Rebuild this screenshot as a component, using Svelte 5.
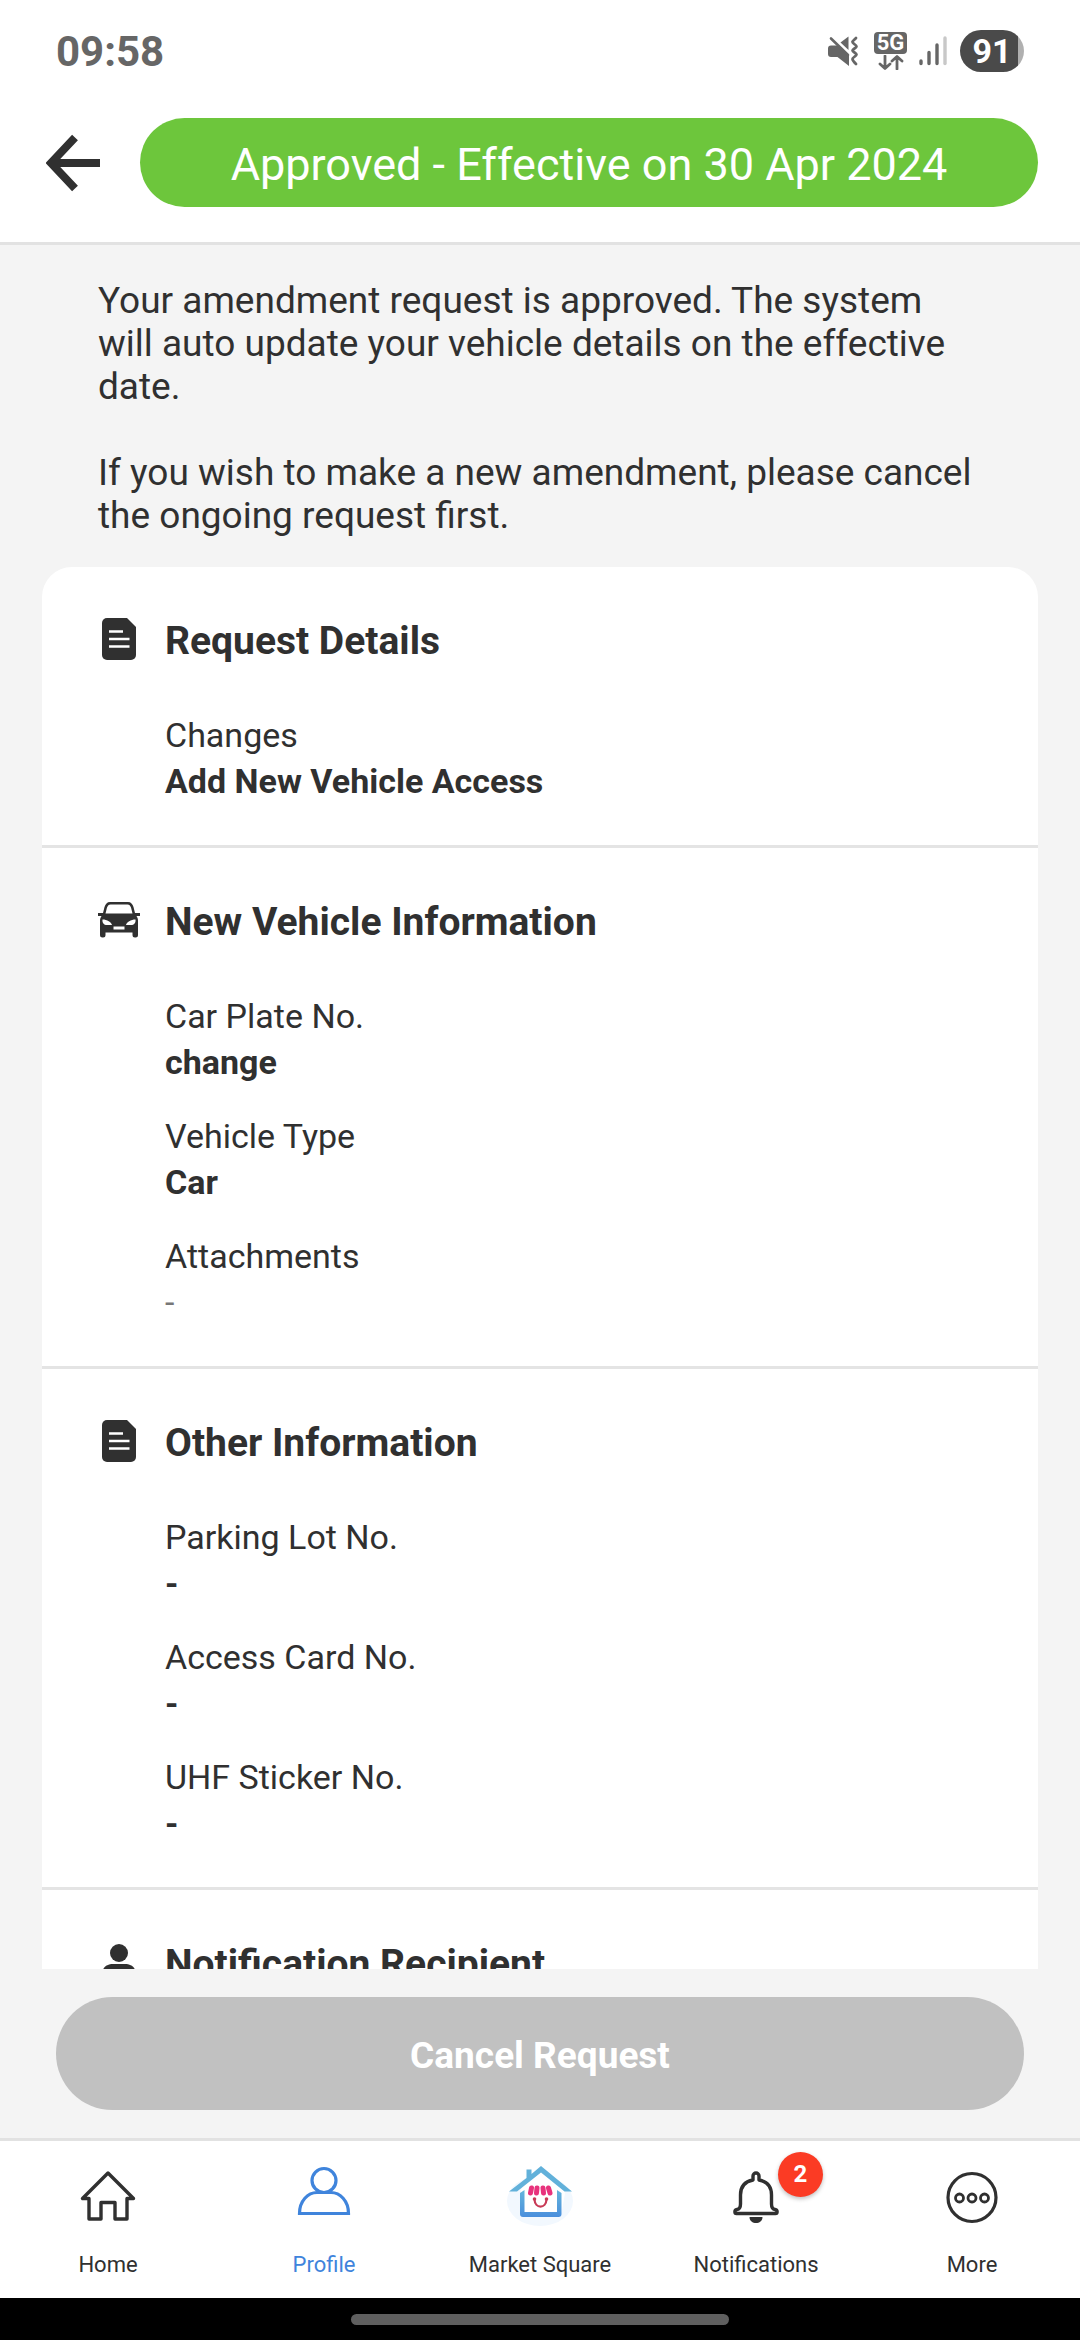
<script>
    let activeTab = $state("profile");

    const notice = [
        "Your amendment request is approved. The system will auto update your vehicle details on the effective date.",
        "If you wish to make a new amendment, please cancel the ongoing request first."
    ];

    const sections = [
        {
            icon: "doc",
            title: "Request Details",
            fields: [{ label: "Changes", value: "Add New Vehicle Access" }]
        },
        {
            icon: "car",
            title: "New Vehicle Information",
            fields: [
                { label: "Car Plate No.", value: "change" },
                { label: "Vehicle Type", value: "Car" },
                { label: "Attachments", value: "-", muted: true }
            ]
        },
        {
            icon: "doc",
            title: "Other Information",
            fields: [
                { label: "Parking Lot No.", value: "-" },
                { label: "Access Card No.", value: "-" },
                { label: "UHF Sticker No.", value: "-" }
            ]
        },
        { icon: "person", title: "Notification Recipient", fields: [] }
    ];

    const tabs = [
        { id: "home", label: "Home" },
        { id: "profile", label: "Profile" },
        { id: "market", label: "Market Square" },
        { id: "notifications", label: "Notifications", badge: 2 },
        { id: "more", label: "More" }
    ];
</script>

{#snippet sectionIcon(name)}
    <svg class="section-icon" viewBox="0 0 42 42" aria-hidden="true">
        {#if name === "doc"}
            <path d="M9 0H29L38 9V37a5 5 0 0 1-5 5H9a5 5 0 0 1-5-5V5a5 5 0 0 1 5-5Z" fill="#303030" />
            <path d="M11 13.5H25M11 21H31.5M11 28.5H31.5" stroke="#fff" stroke-width="2.4" />
        {:else if name === "car"}
            <path
                fill="#303030"
                fill-rule="evenodd"
                d="M12 3H30C33 3 34.5 5 35.5 8L37 14H42V17H38.5C39.500 18.500 40 20 40 22V36a2.500 2.500 0 0 1-2.500 2.500H37a2.500 2.500 0 0 1-2.500-2.500V33.500H7.500V36a2.500 2.500 0 0 1-2.500 2.500H4.500A2.500 2.500 0 0 1 2 36V22C2 20 2.500 18.500 3.500 17H0V14H5L6.500 8C7.500 5 9 3 12 3ZM12.500 5.500C10.500 5.500 10 6.500 9 8.500L7.500 14.500H34.500L33 8.500C32 6.500 31.500 5.500 29.500 5.500ZM4.500 20.500C4 24 6 26 9 26H14C13.500 23 9 20.500 4.500 20.500ZM37.500 20.500C33 20.500 28.500 23 28 26H33C36 26 38 24 37.500 20.500ZM15.500 27.500V30.500H26.500V27.500Z"
            />
        {:else}
            <circle cx="21" cy="12" r="9" fill="#303030" />
            <path d="M4 40V34C4 26 9 23 15 23H27C33 23 38 26 38 34V40Z" fill="#303030" />
        {/if}
    </svg>
{/snippet}

{#snippet tabIcon(name)}
    <svg class="tab-icon" viewBox="0 0 70 70" fill="none" aria-hidden="true">
        {#if name === "home"}
            <path
                d="M35 13L9.500 38.500H16V59H28V42.500H42V59H54V38.500H60.500Z"
                stroke="currentColor"
                stroke-width="3.400"
                stroke-linejoin="round"
            />
        {:else if name === "profile"}
            <circle cx="35" cy="20.500" r="12" stroke="currentColor" stroke-width="3.200" />
            <path d="M10.500 53.500C10.500 41 19 32.500 28 32.500H42C51 32.500 59.500 41 59.500 53.500Z" stroke="currentColor" stroke-width="3.200" />
        {:else if name === "market"}
            <defs>
                <linearGradient id="roof" x1="0" y1="0" x2="0" y2="1">
                    <stop offset="0" stop-color="#64b5dc" />
                    <stop offset="1" stop-color="#4a8fdc" />
                </linearGradient>
            </defs>
            <ellipse cx="35" cy="41" rx="33" ry="25" fill="#f2f8fe" />
            <path d="M23 15L36 8L61 28L56 55H19L16 30Z" fill="#fff" />
            <path d="M4 31.500L21.500 18V9.500H26.500V14L36 6L67 31.500H59.500L36 12.500L12 31.500Z" fill="#62b1da" />
            <path d="M15 33L19.500 30V52H52V30L56.500 33V54a3 3 0 0 1-3 3H18a3 3 0 0 1-3-3Z" fill="url(#roof)" />
            <path
                d="M26.500 28L25.500 33M32 28L31.500 33M38 28L38.500 33M43.500 28L45 33"
                stroke="#e8327c"
                stroke-width="5"
                stroke-linecap="round"
            />
            <path d="M29.500 39.500C30 49 41 49 41.500 39.500" stroke="#c83a56" stroke-width="2.200" />
            <circle cx="29.500" cy="39" r="1.800" fill="#c83a56" />
            <circle cx="41.500" cy="39" r="1.800" fill="#c83a56" />
        {:else if name === "notifications"}
            <path
                d="M32 20V16a3 3 0 0 1 6 0V20C46 21.500 50.500 27 50.500 35V44C50.500 47 51 49 54 49.500C57 50 56.500 53.500 54.500 53.500H15.500C13.500 53.500 13 50 16 49.500C19 49 19.500 47 19.500 44V35C19.500 27 24 21.500 32 20Z"
                stroke="currentColor"
                stroke-width="3.400"
                stroke-linejoin="round"
            />
            <path d="M28.500 57H41.500C41.500 65 28.500 65 28.500 57Z" fill="currentColor" />
        {:else}
            <circle cx="35" cy="37.500" r="24" stroke="currentColor" stroke-width="3.200" />
            <circle cx="22.500" cy="38" r="4" stroke="currentColor" stroke-width="2.800" />
            <circle cx="35" cy="38" r="4" stroke="currentColor" stroke-width="2.800" />
            <circle cx="47.500" cy="38" r="4" stroke="currentColor" stroke-width="2.800" />
        {/if}
    </svg>
{/snippet}

<div class="screen">
    <div class="status-bar">
        <span class="clock">09:58</span>
        <div class="status-icons">
            <svg class="mute" width="30" height="32" viewBox="0 0 30 32" fill="none" aria-hidden="true">
                <path d="M0 13.500a3 3 0 0 1 3-3H10.500L21 20.500V31L9.500 22H3a3 3 0 0 1-3-3Z" fill="#666" />
                <path d="M12.500 7.500L20.500 1.500V15Z" fill="#666" />
                <path d="M3 3.500L20 20" stroke="#666" stroke-width="2.600" stroke-linecap="round" />
                <path
                    d="M28 3C26 5 24.500 6 24.500 7C24.500 8.500 28.500 10 28.500 11.500C28.500 13 24.500 14 24.500 15.500C24.500 17 28.500 18 28.500 19.500C28.500 21 24.500 22.500 24.500 24C24.500 25.500 26 27 28 29"
                    stroke="#666"
                    stroke-width="2.800"
                    stroke-linecap="round"
                />
            </svg>
            <div class="network">
                <span>5G</span>
                <svg width="26" height="15" viewBox="0 0 26 15" fill="none" stroke="#666" stroke-width="2.800" stroke-linecap="round" stroke-linejoin="round" aria-hidden="true">
                    <path d="M7 1V13M2 9L7 13.500L12 9M19 14V2M14 6L19 1.500L24 6" />
                </svg>
            </div>
            <svg class="signal" width="28" height="30" viewBox="0 0 28 30" stroke-width="3.400" stroke-linecap="round" aria-hidden="true">
                <path d="M2 25V27.500M10 16.500V27.500M18 9V27.500" stroke="#666" />
                <path d="M26 2V27.500" stroke="#c8c8c8" />
            </svg>
            <span class="battery">91</span>
        </div>
    </div>

    <header>
        <button class="back" aria-label="Back">
            <svg width="54" height="58" viewBox="0 0 54 58" fill="none" aria-hidden="true">
                <path d="M54 29H6M29 3.500L5 29L29 54.500" stroke="#303030" stroke-width="8" />
            </svg>
        </button>
        <h1>Approved - Effective on 30 Apr 2024</h1>
    </header>

    <main>
        <div class="notice">
            {#each notice as text}
                <p>{text}</p>
            {/each}
        </div>

        <div class="card">
            {#each sections as section}
                <section>
                    <h2>{@render sectionIcon(section.icon)}{section.title}</h2>
                    {#if section.fields.length}
                        <dl>
                            {#each section.fields as field}
                                <div>
                                    <dt>{field.label}</dt>
                                    <dd class:muted={field.muted}>{field.value}</dd>
                                </div>
                            {/each}
                        </dl>
                    {/if}
                </section>
            {/each}
        </div>
    </main>

    <div class="actions">
        <button class="cancel">Cancel Request</button>
    </div>

    <nav>
        {#each tabs as tab}
            <button class="tab" class:active={tab.id === activeTab} onclick={() => (activeTab = tab.id)}>
                <span class="icon-wrap">
                    {@render tabIcon(tab.id)}
                    {#if tab.badge}
                        <span class="badge">{tab.badge}</span>
                    {/if}
                </span>
                {tab.label}
            </button>
        {/each}
    </nav>

    <div class="gesture-bar"><div class="handle"></div></div>
</div>

<style>
    :global(body) {
        margin: 0;
    }

    .screen {
        display: flex;
        flex-direction: column;
        height: 100vh;
        background: #f4f4f4;
        color: #303030;
        font-family: Roboto, "Noto Sans", sans-serif;
    }

    button {
        padding: 0;
        border: none;
        background: none;
        color: inherit;
        font: inherit;
        cursor: pointer;
    }

    svg {
        display: block;
        flex-shrink: 0;
    }

    h1, h2, p, dl, dd {
        margin: 0;
    }

    /* status bar */
    .status-bar {
        display: flex;
        align-items: center;
        justify-content: space-between;
        height: 102px;
        padding: 0 56px;
        background: #fff;
        flex-shrink: 0;
    }

    .clock {
        color: #666;
        font-size: 42px;
        font-weight: 700;
    }

    .status-icons {
        display: flex;
        align-items: center;
    }

    .network {
        display: flex;
        flex-direction: column;
        align-items: center;
        gap: 1px;
        margin: 0 12px 0 16px;
    }

    .network span {
        width: 33px;
        border-radius: 4px;
        background: #666;
        color: #fff;
        font-size: 22px;
        font-weight: 700;
        line-height: 22px;
        text-align: center;
    }

    .battery {
        width: 64px;
        margin-left: 13px;
        border-radius: 21px;
        background: linear-gradient(to right, #4a4a4a 90%, #b0b0b0 90%);
        color: #fff;
        font-size: 34px;
        font-weight: 700;
        line-height: 42px;
        text-align: center;
    }

    /* header */
    header {
        display: flex;
        align-items: center;
        gap: 40px;
        padding: 16px 42px 35px 46px;
        border-bottom: 3px solid #e2e2e2;
        background: #fff;
        flex-shrink: 0;
    }

    h1 {
        flex: 1;
        padding: 4px 0 0;
        border-radius: 45px;
        background: #6dc63c;
        color: #fff;
        font-size: 45px;
        font-weight: 400;
        line-height: 85px;
        text-align: center;
    }

    /* scrolling content */
    main {
        flex: 1;
        min-height: 0;
        overflow-y: auto;
        padding: 34px 42px 0;
        scrollbar-width: none;
    }

    .notice {
        padding: 0 56px;
        margin-bottom: 30px;
        font-size: 37px;
        line-height: 43px;
    }

    .notice p + p {
        margin-top: 43px;
    }

    .card {
        border-radius: 30px;
        background: #fff;
    }

    section {
        padding: 51px 56px 41px;
    }

    section + section {
        border-top: 3px solid #e4e4e4;
    }

    h2 {
        display: flex;
        gap: 25px;
        font-size: 39px;
        font-weight: 700;
        line-height: 46px;
    }

    .section-icon {
        width: 42px;
        height: 42px;
    }

    dl {
        display: flex;
        flex-direction: column;
        gap: 28px;
        padding: 48px 0 0 67px;
        font-size: 34px;
        line-height: 46px;
    }

    dd {
        font-weight: 700;
    }

    dd.muted {
        color: #777;
        font-weight: 400;
    }

    /* bottom button */
    .actions {
        padding: 28px 56px;
        flex-shrink: 0;
    }

    .cancel {
        width: 100%;
        padding-top: 4px;
        border-radius: 57px;
        background: #c1c1c1;
        color: #fff;
        font-size: 37px;
        font-weight: 700;
        line-height: 109px;
    }

    /* tab bar */
    nav {
        display: grid;
        grid-template-columns: repeat(5, 1fr);
        border-top: 3px solid #e2e2e2;
        background: #fff;
        flex-shrink: 0;
    }

    .tab {
        display: flex;
        flex-direction: column;
        align-items: center;
        gap: 22px;
        padding: 19px 0 21px;
        font-size: 22px;
        line-height: 25px;
    }

    .tab.active {
        color: #3f84dc;
    }

    .icon-wrap {
        position: relative;
    }

    .tab-icon {
        width: 70px;
        height: 70px;
    }

    .badge {
        position: absolute;
        top: -8px;
        right: -32px;
        width: 45px;
        border-radius: 50%;
        background: #fb3b24;
        box-shadow: 0 2px 4px rgba(0, 0, 0, 0.25);
        color: #fff;
        font-size: 24px;
        font-weight: 700;
        line-height: 45px;
        text-align: center;
    }

    .gesture-bar {
        display: flex;
        justify-content: center;
        padding: 16px 0 15px;
        background: #000;
        flex-shrink: 0;
    }

    .handle {
        width: 35%;
        height: 11px;
        border-radius: 6px;
        background: #5f5f5f;
    }
</style>
